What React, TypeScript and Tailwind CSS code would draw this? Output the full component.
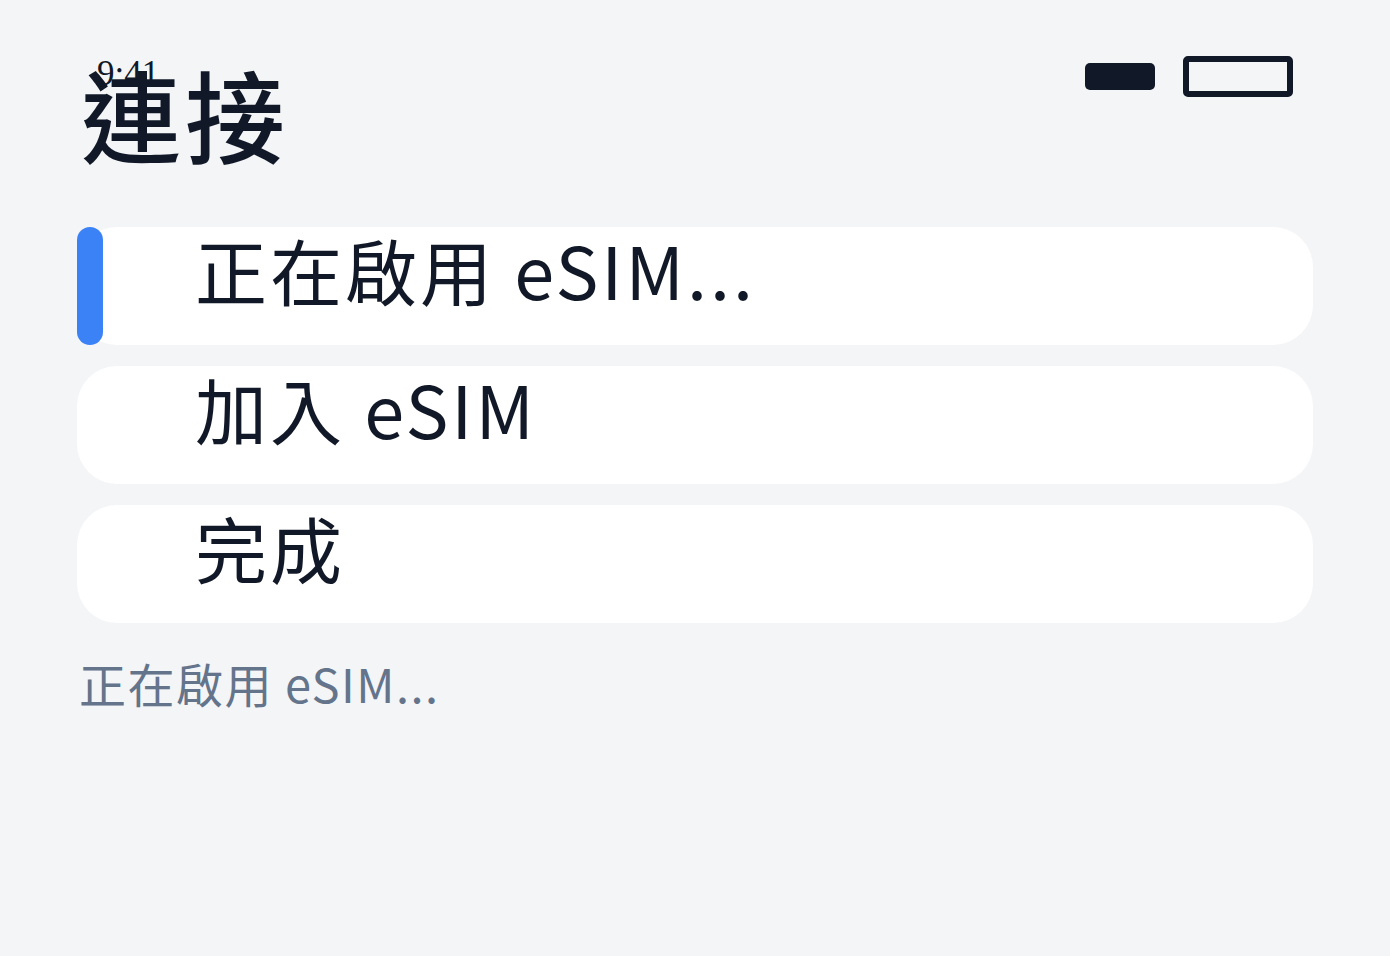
import React from "react";

const steps = [
  { label: "正在啟用 eSIM...", active: true },
  { label: "加入 eSIM", active: false },
  { label: "完成", active: false },
];

export default function App() {
  return (
    <div
      className="min-h-screen w-full bg-[#f4f5f7] px-[77px] pt-[56px] text-[#111827]"
      style={{ fontFamily: '"Noto Sans CJK TC", "Noto Sans", sans-serif' }}
    >
      {/* status bar */}
      <div className="flex h-[41px] items-start justify-between px-[20px]">
        <span
          className="text-[35px] leading-none"
          style={{ fontFamily: '"Liberation Serif", serif' }}
        >
          9:41
        </span>
        <div className="flex h-[41px] items-center gap-[28px]">
          <div className="h-[27px] w-[70px] rounded-[5px] bg-[#111827]" />
          <div className="h-[41px] w-[110px] rounded-[5px] border-[6px] border-[#111827]" />
        </div>
      </div>

      <h1 className="-mt-[34px] pl-[4px] text-[100px] font-medium leading-none tracking-[4px]">連接</h1>

      <div className="mt-[64px] flex flex-col gap-[21px]">
        {steps.map((s) => (
          <div key={s.label} className="relative h-[118px] rounded-[40px] bg-white pl-[118px] pt-[6px]">
            {s.active && (
              <div className="absolute bottom-0 left-0 top-0 w-[26px] rounded-full bg-[#3b82f6]" />
            )}
            <span className="text-[72px] leading-none tracking-[3px]">{s.label}</span>
          </div>
        ))}
      </div>

      <p className="mt-[36px] pl-[2px] text-[47px] leading-none tracking-[1.5px] text-[#64748b]">
        正在啟用 eSIM...
      </p>
    </div>
  );
}
